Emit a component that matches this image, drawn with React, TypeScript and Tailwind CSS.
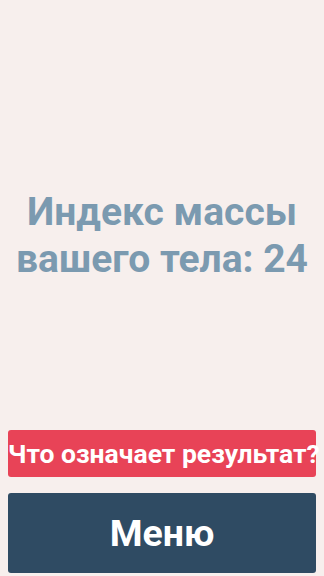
export default function App() {
  return (
    <div
      className="flex h-[576px] w-[324px] flex-col bg-[#f7efed] px-2 pb-[3px]"
      style={{ fontFamily: 'Roboto, "Noto Sans", sans-serif' }}
    >
      <div className="flex flex-1 items-center justify-center pt-[42px]">
        <h1 className="text-center text-[39px] font-bold leading-[47px] text-[#7b9ab0]">
          Индекс массы
          <br />
          вашего тела: 24
        </h1>
      </div>
      <button className="mb-[16px] h-[47px] w-full rounded-[3px] bg-[#e84357] text-[26.5px] font-bold whitespace-nowrap text-white">
        Что означает результат?
      </button>
      <button className="h-[80px] w-full rounded-[3px] bg-[#2f4b63] text-[37.5px] font-bold text-white">
        Меню
      </button>
    </div>
  );
}
